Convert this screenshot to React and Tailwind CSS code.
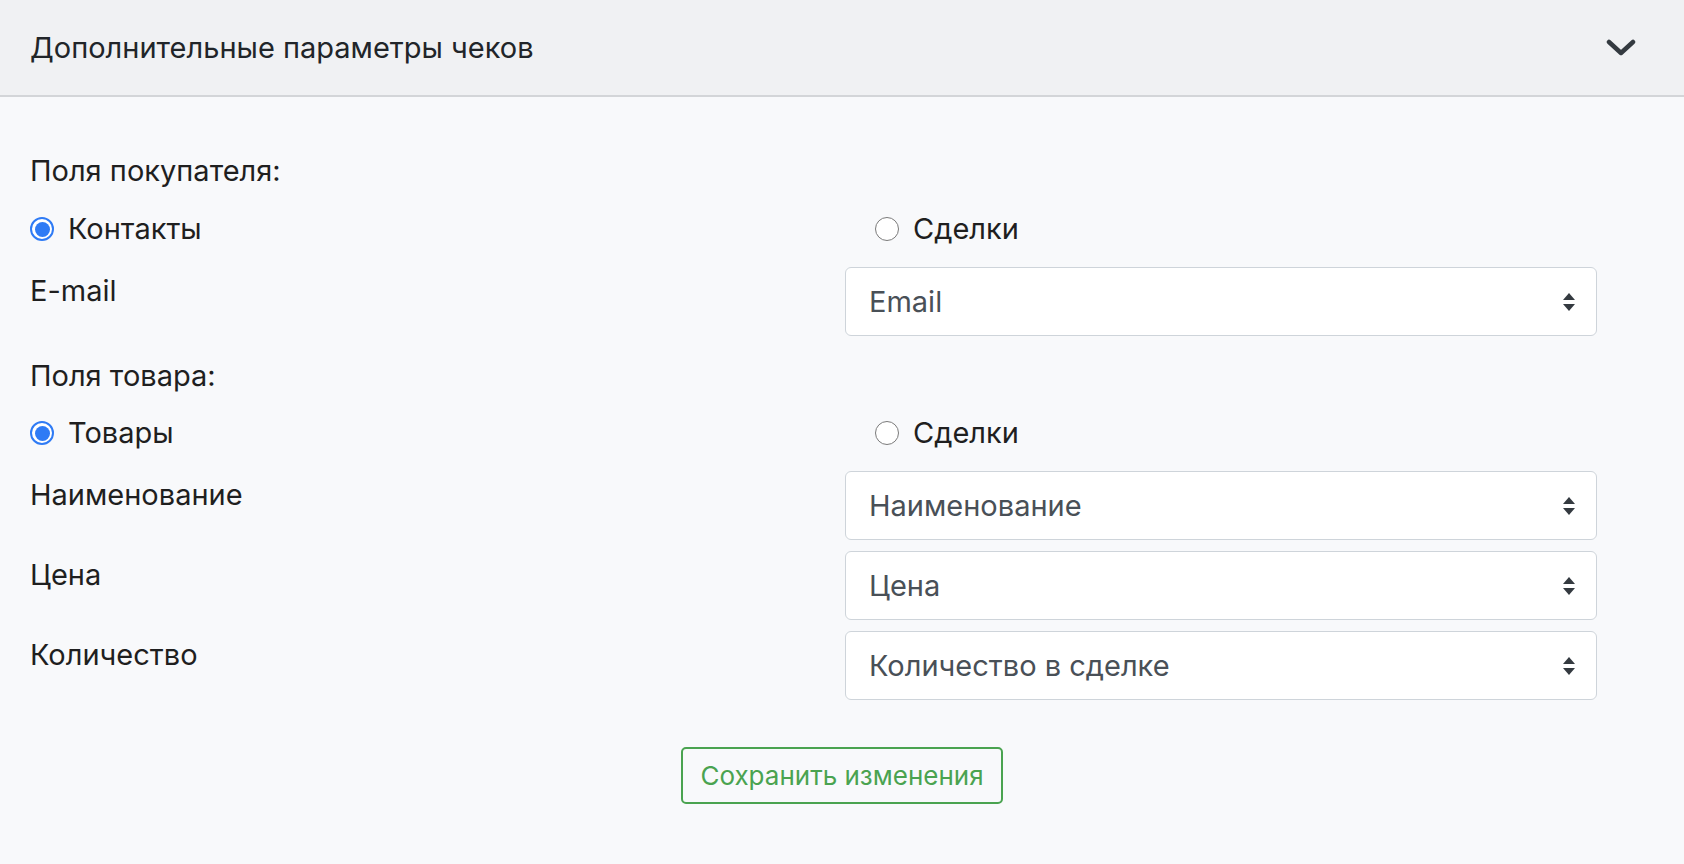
import React from "react";

const font = { fontFamily: "Inter, 'Noto Sans', sans-serif" };

const Radio = ({ checked, label, indent }) => (
    <label className={`flex items-center gap-[14px] h-[36px] ${indent ? "pl-[30px]" : ""}`}>
        {checked ? (
            <span className="w-[24px] h-[24px] rounded-full border-[2px] border-[#2f7bf5] flex items-center justify-center bg-white">
                <span className="w-[15px] h-[15px] rounded-full bg-[#2f7bf5]" />
            </span>
        ) : (
            <span className="w-[24px] h-[24px] rounded-full border border-[#7a7a7a] bg-white" />
        )}
        <span className="text-[29px] text-[#1f1f1f]">{label}</span>
    </label>
);

const Arrows = () => (
    <svg width="14" height="20" viewBox="0 0 14 20">
        <path d="M7 1 L13 8 H1 Z" fill="#343a40" />
        <path d="M7 19 L13 12 H1 Z" fill="#343a40" />
    </svg>
);

const SelectRow = ({ label, value }) => (
    <div className="grid grid-cols-[815px_1fr]">
        <div className="text-[29px] text-[#1f1f1f] pt-[6px] leading-[36px]">{label}</div>
        <div className="h-[69px] bg-white border border-[#ced4da] rounded-[6px] flex items-center justify-between pl-[23px] pr-[20px]">
            <span className="text-[29px] text-[#495057]">{value}</span>
            <Arrows />
        </div>
    </div>
);

export default function App() {
    return (
        <div className="w-[1684px] h-[864px] bg-[#f8f9fb]" style={font}>
            <div className="h-[97px] bg-[#f0f1f3] border-b-[2px] border-[#d3d5d8] flex items-center justify-between pl-[30px] pr-[48px]">
                <span className="text-[29px] text-[#212529]">Дополнительные параметры чеков</span>
                <svg width="30" height="20" viewBox="0 0 30 20">
                    <path d="M3 4 L15 15 L27 4" fill="none" stroke="#343a40" strokeWidth="4.5" strokeLinecap="round" strokeLinejoin="round" />
                </svg>
            </div>
            <div className="pl-[30px] pr-[87px] pt-[56px]">
                <div className="text-[29px] text-[#1f1f1f] leading-[36px]">Поля покупателя:</div>
                <div className="grid grid-cols-[815px_1fr] mt-[22px]">
                    <Radio checked label="Контакты" />
                    <Radio indent label="Сделки" />
                </div>
                <div className="mt-[20px]">
                    <SelectRow label="E-mail" value="Email" />
                </div>
                <div className="text-[29px] text-[#1f1f1f] leading-[36px] mt-[22px]">Поля товара:</div>
                <div className="grid grid-cols-[815px_1fr] mt-[21px]">
                    <Radio checked label="Товары" />
                    <Radio indent label="Сделки" />
                </div>
                <div className="mt-[20px] flex flex-col gap-[11px]">
                    <SelectRow label="Наименование" value="Наименование" />
                    <SelectRow label="Цена" value="Цена" />
                    <SelectRow label="Количество" value="Количество в сделке" />
                </div>
                <div className="flex justify-center mt-[47px] pl-[57px]">
                    <button className="h-[57px] px-[17px] border-[2px] border-[#4aa350] rounded-[5px] text-[#4aa350] text-[26px]">
                        Сохранить изменения
                    </button>
                </div>
            </div>
        </div>
    );
}
